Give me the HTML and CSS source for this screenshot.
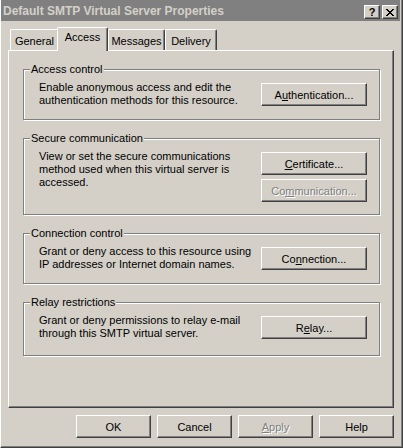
FILE: index.html
```html
<!DOCTYPE html>
<html lang="en">
<head>
    <meta charset="UTF-8">
    <title>Default SMTP Virtual Server Properties</title>
    <link rel="stylesheet" href="styles.css">
</head>
<body>

    <div class="window">

        <div class="titlebar">
            <span class="title">Default SMTP Virtual Server Properties</span>
            <div class="caption-btns">
                <span class="cap-btn cap-help">?</span>
                <span class="cap-btn">
                    <svg width="8" height="7" viewBox="0 0 8 7" shape-rendering="crispEdges">
                        <rect x="0" y="0" width="2" height="1"/><rect x="6" y="0" width="2" height="1"/>
                        <rect x="1" y="1" width="2" height="1"/><rect x="5" y="1" width="2" height="1"/>
                        <rect x="2" y="2" width="4" height="1"/>
                        <rect x="3" y="3" width="2" height="1"/>
                        <rect x="2" y="4" width="4" height="1"/>
                        <rect x="1" y="5" width="2" height="1"/><rect x="5" y="5" width="2" height="1"/>
                        <rect x="0" y="6" width="2" height="1"/><rect x="6" y="6" width="2" height="1"/>
                    </svg>
                </span>
            </div>
        </div>

        <div class="dialog-body">

            <div class="tabs">
                <div class="tab tab-general">General</div>
                <div class="tab tab-access active">Access</div>
                <div class="tab tab-messages">Messages</div>
                <div class="tab tab-delivery">Delivery</div>
            </div>

            <div class="sheet">

                <fieldset class="group">
                    <legend>Access control</legend>
                    <div class="group-row">
                        <p class="desc">Enable anonymous access and edit the<br>authentication methods for this resource.</p>
                        <div class="actions">
                            <button class="btn btn-wide">A<u>u</u>thentication...</button>
                        </div>
                    </div>
                </fieldset>

                <fieldset class="group">
                    <legend>Secure communication</legend>
                    <div class="group-row">
                        <p class="desc">View or set the secure communications<br>method used when this virtual server is<br>accessed.</p>
                        <div class="actions">
                            <button class="btn btn-wide"><u>C</u>ertificate...</button>
                            <button class="btn btn-wide disabled">Co<u>m</u>munication...</button>
                        </div>
                    </div>
                </fieldset>

                <fieldset class="group">
                    <legend>Connection control</legend>
                    <div class="group-row">
                        <p class="desc">Grant or deny access to this resource using<br>IP addresses or Internet domain names.</p>
                        <div class="actions">
                            <button class="btn btn-wide">Co<u>n</u>nection...</button>
                        </div>
                    </div>
                </fieldset>

                <fieldset class="group group-last">
                    <legend>Relay restrictions</legend>
                    <div class="group-row">
                        <p class="desc">Grant or deny permissions to relay e-mail<br>through this SMTP virtual server.</p>
                        <div class="actions">
                            <button class="btn btn-wide">R<u>e</u>lay...</button>
                        </div>
                    </div>
                </fieldset>

            </div>

            <div class="footer">
                <button class="btn">OK</button>
                <button class="btn">Cancel</button>
                <button class="btn disabled"><u>A</u>pply</button>
                <button class="btn">Help</button>
            </div>

        </div>
    </div>

</body>
</html>
```

FILE: styles.css
```css
/* classic 3D dialog colours */
:root {
    --face: #d4d0c8;
    --light: #ffffff;
    --shadow: #808080;
    --dark: #404040;
    --ui-font: "Liberation Sans", Arial, sans-serif;
}

* { box-sizing: border-box; }

body {
    margin: 0;
    background: var(--face);
    font-family: var(--ui-font);
    font-size: 11px;
    color: #000;
}

/* window frame */
.window {
    width: 403px;
    height: 448px;
    background: var(--face);
    border-left: 1px solid var(--light);
    border-right: 1px solid var(--dark);
    border-bottom: 1px solid var(--dark);
    box-shadow: inset -1px -1px 0 var(--shadow);
    padding: 0 2px 2px 0;
}

/* title bar (inactive) */
.titlebar {
    height: 21px;
    background: var(--shadow);
    color: var(--face);
    display: flex;
    justify-content: space-between;
    padding: 0 2px 0 2px;
}
.title {
    font-weight: bold;
    font-size: 12px;
    line-height: 21px;
    padding-top: 1px;
}
.caption-btns {
    display: flex;
    gap: 2px;
    margin-top: 5px;
}
.cap-btn {
    width: 16px;
    height: 14px;
    background: var(--face);
    border: 1px solid;
    border-color: var(--light) var(--dark) var(--dark) var(--light);
    box-shadow: inset -1px -1px 0 var(--shadow);
    display: flex;
    align-items: center;
    justify-content: center;
    color: #000;
}
.cap-help {
    font-weight: bold;
    font-size: 11px;
    line-height: 1;
}

.dialog-body {
    padding-left: 7px;
}

/* tabs */
.tabs {
    display: flex;
    align-items: flex-end;
    height: 23px;
    margin-top: 6px;
    padding-left: 2px;
}
.tab {
    height: 21px;
    border-top: 1px solid var(--light);
    border-left: 1px solid var(--light);
    border-right: 1px solid var(--dark);
    box-shadow: inset -1px 0 0 var(--shadow);
    border-radius: 2px 2px 0 0;
    text-align: center;
    line-height: 20px;
    padding-top: 1px;
}
.tab-general { width: 49px; }
.tab-access { width: 51px; margin-left: -2px; }
.tab-messages { width: 57px; }
.tab-delivery { width: 52px; }

.tab.active {
    height: 24px;
    margin-bottom: -1px;
    position: relative;
    z-index: 1;
    background: var(--face);
    line-height: 19px;
    padding-top: 0;
}

/* property sheet */
.sheet {
    width: 386px;
    height: 358px;
    border: 1px solid;
    border-color: var(--light) var(--dark) var(--dark) var(--light);
    box-shadow: inset -1px -1px 0 var(--shadow);
    padding: 12px 13px 0 14px;
}

.group {
    margin: 0 0 12px 0;
    padding: 7px 12px 12px 15px;
    min-width: 0;
    border: 1px solid var(--shadow);
    box-shadow: 1px 1px 0 var(--light), inset 1px 1px 0 var(--light);
}
.group-last { padding-bottom: 15px; }
.group legend {
    margin-left: -9px;
    padding: 0 1px;
    line-height: 13px;
    background: var(--face);
}

.group-row {
    display: flex;
    justify-content: space-between;
    align-items: flex-start;
}
.desc {
    margin: -2px 0 0 0;
    line-height: 13px;
}
.actions {
    display: flex;
    flex-direction: column;
    gap: 4px;
}

/* push buttons */
.btn {
    width: 75px;
    height: 23px;
    padding: 0;
    font-family: var(--ui-font);
    font-size: 11px;
    color: #000;
    background: var(--face);
    border: 1px solid;
    border-color: var(--light) var(--dark) var(--dark) var(--light);
    box-shadow: inset -1px -1px 0 var(--shadow);
    border-radius: 0;
}
.btn-wide { width: 106px; }
.btn.disabled {
    color: var(--shadow);
    text-shadow: 1px 1px 0 var(--light);
}

.footer {
    width: 386px;
    display: flex;
    justify-content: flex-end;
    gap: 6px;
    margin-top: 7px;
}
```
